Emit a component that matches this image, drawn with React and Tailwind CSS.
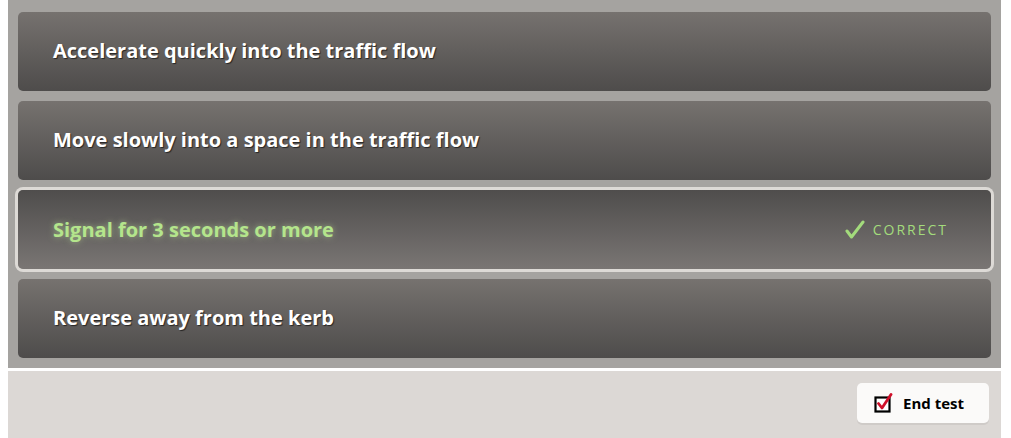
const answers = [
  { id: 1, text: 'Accelerate quickly into the traffic flow' },
  { id: 2, text: 'Move slowly into a space in the traffic flow' },
  { id: 3, text: 'Signal for 3 seconds or more', correct: true },
  { id: 4, text: 'Reverse away from the kerb' },
];

function CheckboxIcon() {
  return (
    <svg width="20" height="20" viewBox="0 0 20 20" className="shrink-0">
      <rect x="1.5" y="4.5" width="14" height="14" fill="white" stroke="black" strokeWidth="2.2" />
      <path d="M4.5 10.5 L8 15 L17 1.5" fill="none" stroke="#d0102a" strokeWidth="2.8" strokeLinecap="round" strokeLinejoin="round" />
    </svg>
  );
}

function AnswerRow({ answer }) {
  if (answer.correct) {
    return (
      <li className="flex h-[79px] items-center justify-between rounded-[5px] bg-gradient-to-b from-[#4f4d4c] to-[#7a7674] pl-[35px] pr-[43px] ring-[3px] ring-[#dddad6]">
        <span className="text-[20px] font-bold text-[#b4e58c] [text-shadow:0_0_6px_rgba(200,240,160,0.55)]">
          {answer.text}
        </span>
        <span className="flex items-center gap-[8px] text-[14px] tracking-[2px] text-[#a3db7c]">
          <svg width="20" height="20" viewBox="0 0 20 20">
            <path d="M2 11 L6.5 17 L18 2" fill="none" stroke="#a3db7c" strokeWidth="3" strokeLinecap="round" strokeLinejoin="round" />
          </svg>
          CORRECT
        </span>
      </li>
    );
  }
  return (
    <li className="flex h-[79px] items-center rounded-[5px] bg-gradient-to-b from-[#76726f] to-[#4e4c4b] pl-[35px]">
      <span className="-mt-[2px] text-[20px] font-bold text-white [text-shadow:1px_1px_1px_rgba(0,0,0,0.6)]">
        {answer.text}
      </span>
    </li>
  );
}

export default function App() {
  return (
    <div className="h-[438px] w-[1011px] bg-white px-[8px] font-['Open_Sans',sans-serif]">
      <div className="w-[993px]">
        <ul className="flex flex-col gap-[10px] bg-[#a5a3a0] px-[10px] pb-[10px] pt-[12px]">
          {answers.map((a) => (
            <AnswerRow key={a.id} answer={a} />
          ))}
        </ul>
        <div className="mt-[3px] flex h-[67px] items-start justify-end bg-[#dcd8d5] pr-[12px] pt-[12px]">
          <button className="flex h-[40px] w-[132px] items-center gap-[9px] rounded-[5px] bg-[#fbfaf9] pl-[17px] text-[15px] font-bold text-black shadow-[0_2px_0_rgba(0,0,0,0.06)]">
            <CheckboxIcon />
            End test
          </button>
        </div>
      </div>
    </div>
  );
}
